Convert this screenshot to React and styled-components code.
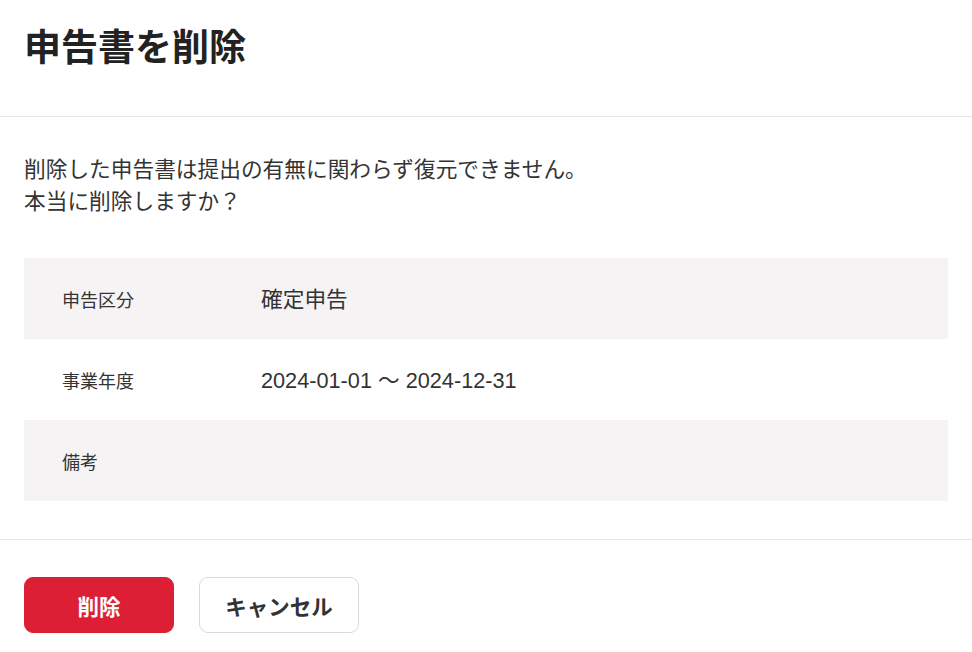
import React from "react"
import styled, { createGlobalStyle } from "styled-components"

const GlobalStyle = createGlobalStyle`
  body {
    margin: 0;
    background: #fff;
    font-family: "Liberation Sans", "Noto Sans CJK JP", sans-serif;
    color: #333;
  }
`

const Dialog = styled.div`
  width: 972px;
  background: #fff;
`

const Header = styled.header`
  padding: 29px 24px 47px;
  border-bottom: 1px solid #e6e6e6;
`

const Title = styled.h1`
  margin: 0;
  font-size: 37px;
  line-height: 40px;
  font-weight: 700;
  color: #222;
`

const Body = styled.section`
  padding: 37px 24px 38px;
`

const Message = styled.p`
  margin: 0 0 40px;
  font-size: 21.7px;
  line-height: 32px;
  color: #333;
`

const Table = styled.dl`
  margin: 0;
  display: flex;
  flex-direction: column;
`

const Row = styled.div`
  display: grid;
  grid-template-columns: 199px 1fr;
  align-items: center;
  height: 81px;
  padding-left: 38px;
  background: ${p => (p.$shaded ? "#f5f3f4" : "#fff")};
`

const Label = styled.dt`
  font-size: 18px;
  color: #333;
`

const Value = styled.dd`
  margin: 0 0 3px;
  font-size: 21.7px;
  color: #333;
`

const Footer = styled.footer`
  display: flex;
  gap: 25px;
  padding: 37px 24px 0;
  border-top: 1px solid #e6e6e6;
`

const Button = styled.button`
  height: 56px;
  width: ${p => p.$width}px;
  border-radius: 9px;
  font-family: inherit;
  font-size: 21.5px;
  font-weight: 700;
  cursor: pointer;
  color: ${p => (p.$danger ? "#fff" : "#333")};
  background: ${p => (p.$danger ? "#dc1f34" : "#fff")};
  border: 1px solid ${p => (p.$danger ? "#dc1f34" : "#d9d9d9")};
`

const rows = [
  { label: "申告区分", value: "確定申告" },
  { label: "事業年度", value: "2024-01-01 ～ 2024-12-31" },
  { label: "備考", value: "" },
]

const App = () => {
  return (
    <Dialog>
      <GlobalStyle />
      <Header>
        <Title>申告書を削除</Title>
      </Header>
      <Body>
        <Message>
          削除した申告書は提出の有無に関わらず復元できません。
          <br />
          本当に削除しますか？
        </Message>
        <Table>
          {rows.map((r, i) => (
            <Row key={r.label} $shaded={i % 2 === 0}>
              <Label>{r.label}</Label>
              <Value>{r.value}</Value>
            </Row>
          ))}
        </Table>
      </Body>
      <Footer>
        <Button $danger $width={150}>削除</Button>
        <Button $width={160}>キャンセル</Button>
      </Footer>
    </Dialog>
  )
}

export default App
